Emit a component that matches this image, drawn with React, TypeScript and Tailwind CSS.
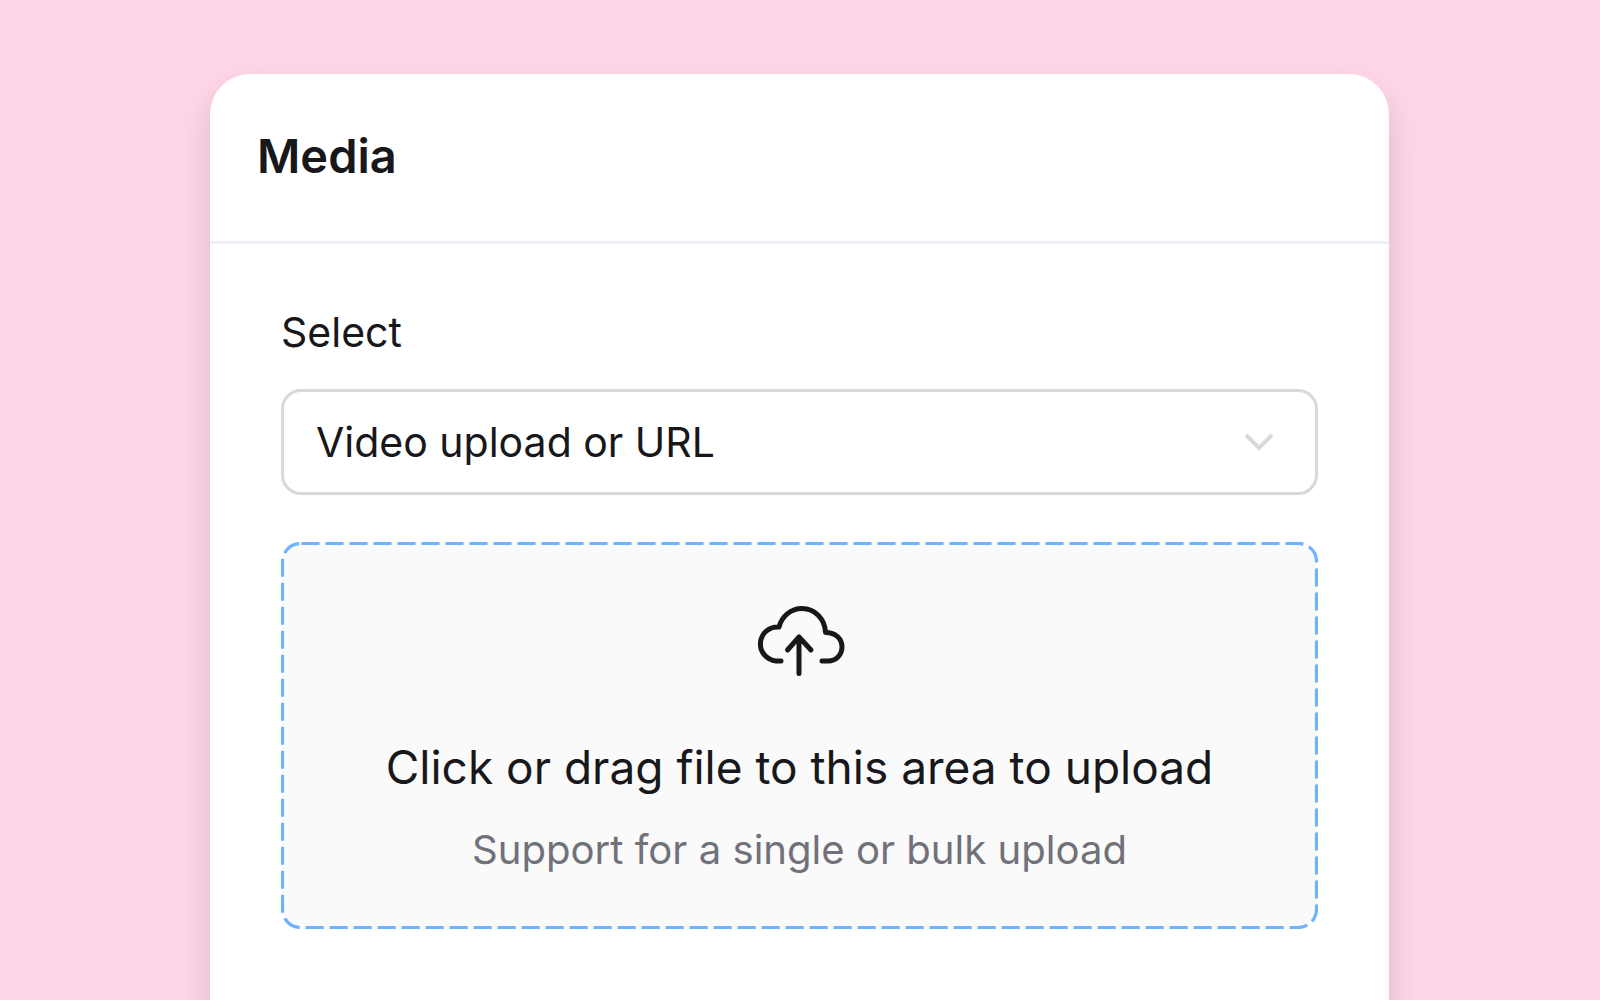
export default function App() {
  return (
    <div className="h-screen overflow-hidden bg-[#ffd6e7] pt-[74px] pl-[210px] font-['Inter',sans-serif] text-[#18181b]">
      <div className="h-[1000px] w-[1179px] rounded-t-[40px] bg-white shadow-[0_16px_32px_rgba(0,0,0,0.14)]">
        <div className="flex h-[170px] items-start border-b-[3px] border-[#edf1f7] pl-[47px] pt-[54px]">
          <h1 className="text-[47px] leading-[56px] font-semibold">Media</h1>
        </div>
        <div className="pl-[71px] pr-[71px] pt-[64px]">
          <div className="text-[41px] leading-[48px]">Select</div>
          <div className="mt-[33px] flex h-[106px] items-center justify-between rounded-[20px] border-[3px] border-[#d9d9d9] pl-[32px] pr-[41px]">
            <span className="text-[41px] leading-[48px]">Video upload or URL</span>
            <svg width="30" height="18" viewBox="0 0 30 18" fill="none" stroke="#d9d9d9" strokeWidth="4">
              <path d="M2 2l13 13L28 2" />
            </svg>
          </div>
          <div className="relative mt-[47px] flex h-[387px] flex-col items-center bg-[#fafafa] rounded-[20px] pt-[63px]">
            <svg className="absolute inset-0 h-full w-full" fill="none">
              <rect x="1.5" y="1.5" width="1034" height="384" rx="18" stroke="#6db3ff" strokeWidth="3.2" strokeDasharray="18 6" strokeDashoffset="-1" />
            </svg>
            <svg className="overflow-visible" width="88" height="74" viewBox="0 0 88 74" fill="none" stroke="#18181b" strokeWidth="5" strokeLinecap="round" strokeLinejoin="round">
              <path d="M25 56H20A17 17 0 0 1 23 22C26 11 35 3.500 46 3.500C59 3.500 69 14 69.500 27.500C80 27.500 86 34 86 42C86 50 80 56 72 56H66" />
              <path d="M43 68.500V32M31.500 45L43 32L55 45" />
            </svg>
            <div className="mt-[60px] text-[46px] leading-[56px]">Click or drag file to this area to upload</div>
            <div className="mt-[31px] text-[40.1px] leading-[48px] text-[#71717a]">Support for a single or bulk upload</div>
          </div>
        </div>
      </div>
    </div>
  );
}
